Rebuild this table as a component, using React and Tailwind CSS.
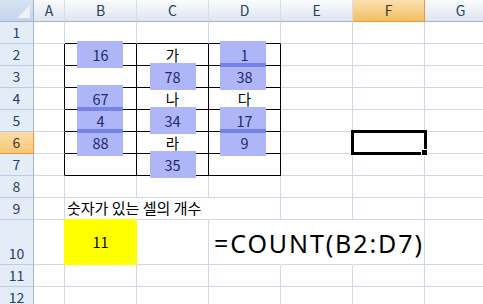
import React from 'react';

const COLS = ['A', 'B', 'C', 'D', 'E', 'F', 'G'];
const ROWS = [1, 2, 3, 4, 5, 6, 7, 8, 9, 10, 11, 12];

const RIGHT = {
  grid: 'border-r-[#d0d7e5]',
  black: 'border-r-black',
  none: 'border-r-white',
  yellow: 'border-r-[#ffff00]',
};
const BOTTOM = {
  grid: 'border-b-[#d0d7e5]',
  black: 'border-b-black',
  yellow: 'border-b-[#ffff00]',
};

// cell values
const VALUES = {
  '2B': '16', '2C': '가', '2D': '1',
  '3C': '78', '3D': '38',
  '4B': '67', '4C': '나', '4D': '다',
  '5B': '4', '5C': '34', '5D': '17',
  '6B': '88', '6C': '라', '6D': '9',
  '7C': '35',
  '10B': '11',
};

// highlighter marks drawn over the value cells; band = overlap with the mark above
const MARKS = {
  '2B': false, '2D': false, '3C': false, '3D': true, '4B': false,
  '5B': true, '5C': false, '5D': false, '6B': true, '6D': true, '7C': false,
};
const MARK_LEFT = { B: 'left-[12px]', C: 'left-[13px]', D: 'left-[11px]' };

function rightKind(r, c) {
  if (r >= 2 && r <= 7 && ['A', 'B', 'C', 'D'].includes(c)) return 'black';
  if (r === 9 && (c === 'B' || c === 'C')) return 'none';
  if (r === 10 && (c === 'A' || c === 'B')) return 'yellow';
  if (r === 10 && (c === 'D' || c === 'E')) return 'none';
  return 'grid';
}

function bottomKind(r, c) {
  if (r >= 1 && r <= 7 && ['B', 'C', 'D'].includes(c)) return 'black';
  if ((r === 9 || r === 10) && c === 'B') return 'yellow';
  return 'grid';
}

function Corner() {
  return (
    <div className="relative border-r border-b border-r-[#9eb6ce] border-b-[#9eb6ce] bg-gradient-to-b from-[#d7e3f3] to-[#c3d4ec]">
      <svg width="33" height="21" className="block">
        <polygon points="30,5 30,18 17,18" fill="#eef2f8" />
      </svg>
    </div>
  );
}

function ColHeader({ c }) {
  const active = c === 'F';
  return (
    <div
      className={
        active
          ? 'flex items-center justify-center border-r border-b border-r-[#f29536] border-b-[#f29536] bg-gradient-to-b from-[#fae0b0] to-[#f1c05f] text-[14px] text-[#3a3a2a]'
          : 'flex items-center justify-center border-r border-b border-r-[#d5dde8] border-b-[#9eb6ce] bg-gradient-to-b from-[#f9fbfd] to-[#dfe6ef] text-[14px] text-[#27415f]'
      }
    >
      {c}
    </div>
  );
}

function RowHeader({ r }) {
  const active = r === 6;
  return (
    <div
      className={
        active
          ? 'flex items-end justify-center border-r border-b border-r-[#f29536] border-b-[#f29536] bg-gradient-to-b from-[#fbdca4] to-[#f6c877] text-[14px] leading-[21px] text-[#3a3a2a]'
          : 'flex items-end justify-center border-r border-b border-r-[#9eb6ce] border-b-[#bccbdf] bg-[#e4ecf7] text-[14px] leading-[21px] text-[#27415f]'
      }
    >
      {r}
    </div>
  );
}

function Cell({ r, c }) {
  const key = `${r}${c}`;
  const value = VALUES[key];
  const hasMark = key in MARKS;
  const yellow = key === '10B';
  const cls = [
    'relative flex items-center border-r border-b',
    RIGHT[rightKind(r, c)],
    BOTTOM[bottomKind(r, c)],
    yellow ? 'bg-[#ffff00]' : 'bg-white',
  ].join(' ');

  return (
    <div className={cls}>
      {hasMark && (
        <div className={`absolute ${MARK_LEFT[c]} top-[-3px] z-10 h-[27px] w-[46px] bg-[#aeb6f7]`}>
          {MARKS[key] && <div className="h-[4px] bg-[#7383ea]" />}
        </div>
      )}
      {value && (
        <span
          className={
            hasMark
              ? 'relative z-20 w-full text-center text-[14.5px] text-[#25286a]'
              : 'relative z-20 w-full text-center text-[14.5px] text-black'
          }
        >
          {value}
        </span>
      )}
      {key === '9B' && (
        <span className="relative z-20 whitespace-nowrap pl-[2px] text-[15px] text-black">
          숫자가 있는 셀의 개수
        </span>
      )}
      {key === '10D' && (
        <span className="relative z-20 whitespace-nowrap pl-[5px] pt-[3px] font-['Noto_Sans',sans-serif] text-[25px] leading-none tracking-[1.9px] text-black">
          =COUNT(B2:D7)
        </span>
      )}
      {key === '6F' && (
        <div className="absolute left-[-2px] top-[-2px] z-30 h-[25px] w-[76px] border-[3px] border-black">
          <div className="absolute left-[67px] top-[16px] h-[7px] w-[7px] border border-white bg-black" />
        </div>
      )}
    </div>
  );
}

export default function App() {
  return (
    <div className="h-[304px] w-[483px] overflow-hidden bg-white font-['Noto_Sans_CJK_KR','Noto_Sans',sans-serif]">
      <div className="grid grid-cols-[34px_31px_72px_72px_72px_72px_72px_72px] grid-rows-[22px_22px_22px_22px_22px_22px_22px_22px_22px_22px_45px_22px_22px]">
        <Corner />
        {COLS.map((c) => (
          <ColHeader key={c} c={c} />
        ))}
        {ROWS.map((r) => (
          <React.Fragment key={r}>
            <RowHeader r={r} />
            {COLS.map((c) => (
              <Cell key={c} r={r} c={c} />
            ))}
          </React.Fragment>
        ))}
      </div>
    </div>
  );
}
